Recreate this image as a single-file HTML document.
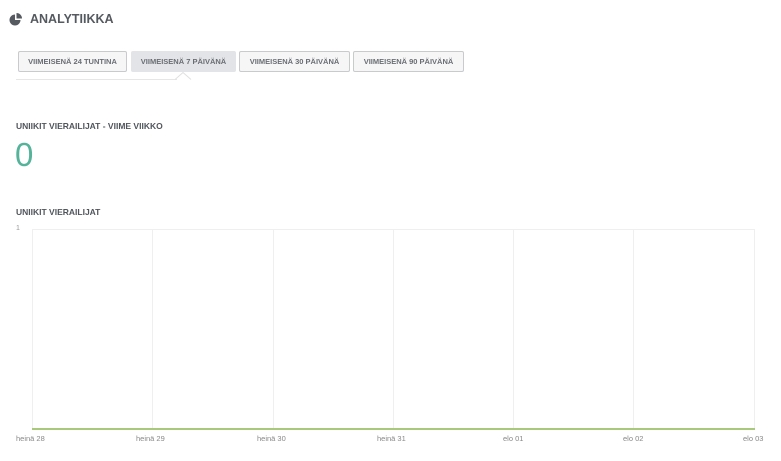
<!DOCTYPE html>
<html><head><style>
body{margin:0;background:#fff;width:781px;height:461px;position:relative;font-family:"Liberation Sans",sans-serif;overflow:hidden}
.a{position:absolute}
.h{left:30px;top:12px;font-size:12.5px;font-weight:bold;color:#555a60;letter-spacing:0}
.b{position:absolute;top:51px;height:19px;border:1px solid #c9cacc;border-radius:2px;background:#f6f6f6;font-size:7.5px;font-weight:bold;color:#6a6e74;line-height:19px;text-align:center;box-sizing:content-box}
.t{font-size:8.5px;font-weight:bold;color:#50555c}
.x{font-size:7.5px;color:#888;top:434px}
.v{position:absolute;top:229px;width:1px;height:200px;background:#efefef}
</style></head><body>
<svg class="a" style="left:9px;top:13px" width="14" height="13" viewBox="0 0 14 13"><path d="M6 1.5A5.5 5.5 0 1 0 11.5 7H6Z" fill="#555a60"/><path d="M7.5 0A5.5 5.5 0 0 1 13 5.5H7.5Z" fill="#555a60"/></svg>
<div class="a h">ANALYTIIKKA</div>
<div class="b" style="left:18px;width:107px">VIIMEISENÄ 24 TUNTINA</div>
<div class="b" style="left:131px;width:103px;background:#e3e4e7;border-color:#e3e4e7">VIIMEISENÄ 7 PÄIVÄNÄ</div>
<div class="b" style="left:239px;width:109px">VIIMEISENÄ 30 PÄIVÄNÄ</div>
<div class="b" style="left:353px;width:109px">VIIMEISENÄ 90 PÄIVÄNÄ</div>
<div class="a" style="left:16px;top:79px;width:161px;height:1px;background:#e6e6e6"></div>
<svg class="a" style="left:175px;top:72px" width="17" height="9"><path d="M0 7.5L8 .5L16 7.5" fill="none" stroke="#e0e0e0"/></svg>
<div class="a t" style="left:16px;top:121px">UNIIKIT VIERAILIJAT - VIIME VIIKKO</div>
<div class="a" style="left:15px;top:136px;font-size:33px;color:#55b39a;line-height:38px">0</div>
<div class="a t" style="left:16px;top:207px">UNIIKIT VIERAILIJAT</div>
<div class="a" style="left:16px;top:225px;font-size:7px;color:#999">1</div>
<div class="a" style="left:32px;top:229px;width:722px;height:1px;background:#efefef"></div>
<div class="v" style="left:32px"></div><div class="v" style="left:152px"></div><div class="v" style="left:273px"></div><div class="v" style="left:393px"></div><div class="v" style="left:513px"></div><div class="v" style="left:633px"></div><div class="v" style="left:754px"></div>
<div class="a" style="left:32px;top:428px;width:723px;height:2px;background:#a8c97a"></div>
<div class="a x" style="left:16px">heinä 28</div>
<div class="a x" style="left:136px">heinä 29</div>
<div class="a x" style="left:257px">heinä 30</div>
<div class="a x" style="left:377px">heinä 31</div>
<div class="a x" style="left:503px">elo 01</div>
<div class="a x" style="left:623px">elo 02</div>
<div class="a x" style="left:743px">elo 03</div>
</body></html>
